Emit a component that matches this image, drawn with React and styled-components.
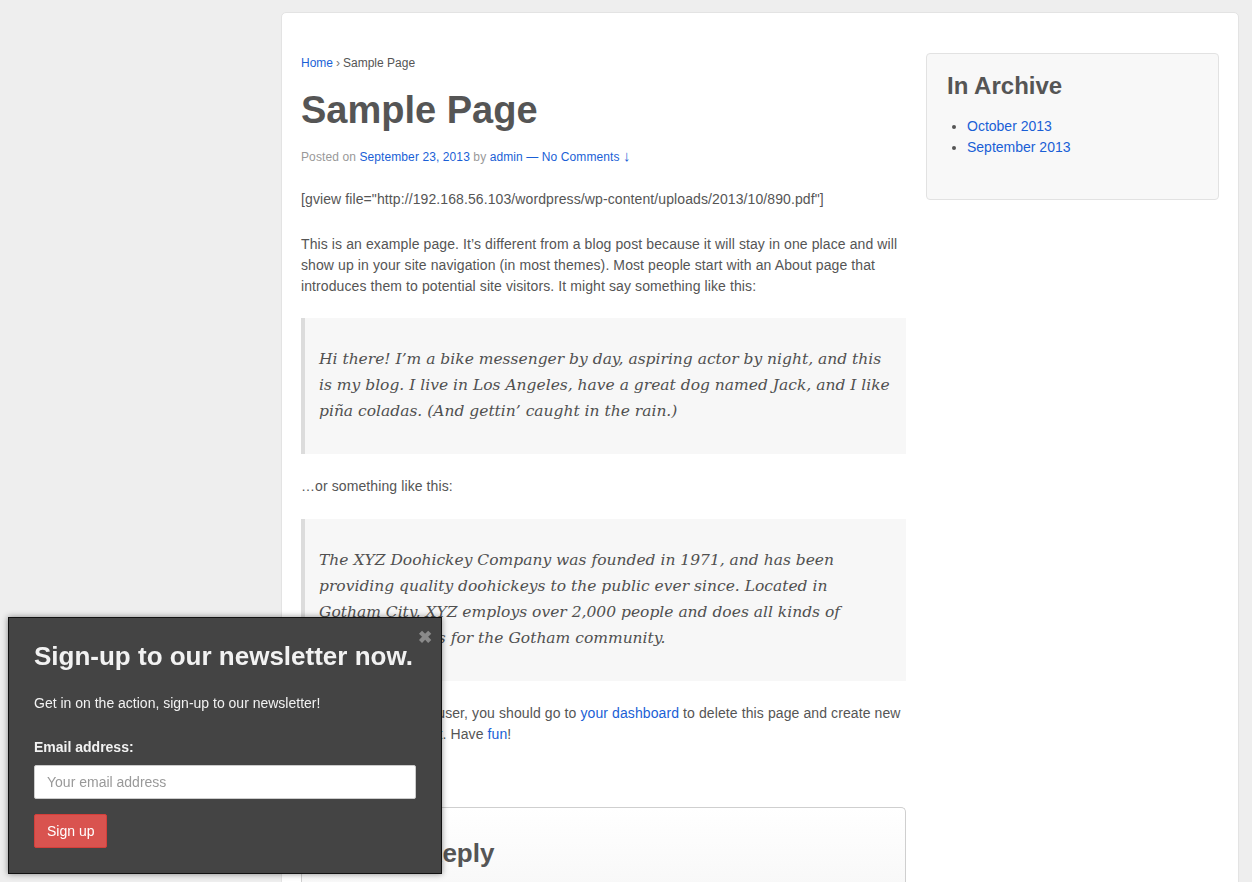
import React from "react";
import styled, { createGlobalStyle } from "styled-components";

const Global = createGlobalStyle`
  html, body { margin: 0; padding: 0; }
  body {
    background: #eeeeee;
    font-family: "Liberation Sans", Arial, sans-serif;
    color: #555;
    overflow: hidden;
  }
  * { box-sizing: border-box; }
`;

const Page = styled.div`
  display: grid;
  grid-template-columns: 281px 958px;
  padding-top: 12px;
  height: 882px;
  overflow: hidden;
`;

const LeftRail = styled.div``;

const Card = styled.div`
  background: #fff;
  border: 1px solid #e3e3e3;
  border-radius: 5px;
  padding: 40px 19px 0 19px;
  display: grid;
  grid-template-columns: 605px 293px;
  column-gap: 20px;
  align-items: start;
  min-height: 900px;
`;

const Main = styled.main`
  font-size: 14px;
  line-height: 21px;
  letter-spacing: 0.1px;
`;

const Link = styled.a`
  color: #1a5fd6;
  text-decoration: none;
`;

const Breadcrumb = styled.div`
  font-size: 12px;
  line-height: 20px;
  color: #555;
  letter-spacing: 0;
`;

const Sep = styled.span`
  color: #777;
  margin: 0 3px;
`;

const Title = styled.h1`
  font-size: 38px;
  line-height: 44px;
  font-weight: bold;
  color: #555;
  margin: 15px 0 14px;
  letter-spacing: 0;
`;

const Meta = styled.div`
  font-size: 12px;
  line-height: 20px;
  color: #999;
  margin-bottom: 22px;
`;

const Arrow = styled.span`
  font-size: 15px;
`;

const P = styled.p`
  margin: 0 0 ${(p) => p.$mb ?? 24}px;
  white-space: nowrap;
`;

const Quote = styled.blockquote`
  margin: 0 0 ${(p) => p.$mb ?? 22}px;
  background: #f7f7f7;
  border-left: 4px solid #dcdcdc;
  padding: 28px 14px 30px 14px;
  font-family: "DejaVu Serif", Georgia, serif;
  font-style: italic;
  font-size: 15.5px;
  line-height: 26px;
  letter-spacing: 0;
  color: #505050;
  white-space: nowrap;
`;

const ReplyBox = styled.section`
  margin-top: 62px;
  border: 1px solid #cfcfcf;
  border-bottom: none;
  border-radius: 5px 5px 0 0;
  background: linear-gradient(#ffffff, #f6f6f6);
  padding: 28px 19px 0;
  height: 100px;
`;

const ReplyTitle = styled.h3`
  margin: 0;
  font-size: 26px;
  line-height: 34px;
  font-weight: bold;
  color: #555;
  letter-spacing: 0;
`;

const Sidebar = styled.aside``;

const Widget = styled.div`
  background: #f8f8f8;
  border: 1px solid #e2e2e2;
  border-radius: 4px;
  padding: 18px 20px 20px;
`;

const WidgetTitle = styled.h3`
  margin: 0 0 17px;
  font-size: 24px;
  line-height: 27px;
  font-weight: bold;
  color: #555;
`;

const List = styled.ul`
  margin: 0 0 21px;
  padding-left: 20px;
  font-size: 14px;
  line-height: 21px;
  color: #555;
`;

const Popup = styled.div`
  position: fixed;
  left: 8px;
  top: 617px;
  width: 434px;
  height: 257px;
  background: #444444;
  border: 1px solid #111;
  box-shadow: 0 0 6px rgba(0, 0, 0, 0.45);
  padding: 20px 25px 0 25px;
  color: #fff;
`;

const Close = styled.span`
  position: absolute;
  right: 9px;
  top: 10px;
  color: #8a8a8a;
  font-size: 17px;
  font-weight: bold;
  line-height: 20px;
`;

const PopTitle = styled.h2`
  margin: 0;
  font-size: 26px;
  line-height: 36px;
  font-weight: bold;
  color: #f2f2f2;
`;

const PopText = styled.p`
  margin: 19px 0 0;
  font-size: 14px;
  line-height: 20px;
  color: #f2f2f2;
`;

const Label = styled.label`
  display: block;
  margin-top: 24px;
  font-size: 14px;
  line-height: 20px;
  font-weight: bold;
  color: #f2f2f2;
`;

const Input = styled.input`
  display: block;
  margin-top: 8px;
  width: 382px;
  height: 34px;
  border: 1px solid #ccc;
  border-radius: 2px;
  padding: 0 12px;
  font-family: "Liberation Sans", Arial, sans-serif;
  font-size: 14px;
  color: #555;
  &::placeholder { color: #999; }
`;

const Button = styled.button`
  display: block;
  margin-top: 15px;
  height: 34px;
  padding: 0 12px;
  background: #d9534f;
  border: 1px solid #d43f3a;
  border-radius: 2px;
  color: #fff;
  font-family: "Liberation Sans", Arial, sans-serif;
  font-size: 14px;
`;

export default function App() {
  return (
    <>
      <Global />
      <Page>
        <LeftRail />
        <Card>
          <Main>
            <Breadcrumb>
              <Link href="#">Home</Link>
              <Sep>›</Sep>Sample Page
            </Breadcrumb>
            <Title>Sample Page</Title>
            <Meta>
              Posted on <Link href="#">September 23, 2013</Link> by{" "}
              <Link href="#">admin</Link> <Link href="#">— No Comments <Arrow>↓</Arrow></Link>
            </Meta>
            <P>[gview file="http://192.168.56.103/wordpress/wp-content/uploads/2013/10/890.pdf"]</P>
            <P $mb={21}>
              This is an example page. It’s different from a blog post because it will stay in one place and will
              <br />
              show up in your site navigation (in most themes). Most people start with an About page that
              <br />
              introduces them to potential site visitors. It might say something like this:
            </P>
            <Quote $mb={22}>
              Hi there! I’m a bike messenger by day, aspiring actor by night, and this
              <br />
              is my blog. I live in Los Angeles, have a great dog named Jack, and I like
              <br />
              piña coladas. (And gettin’ caught in the rain.)
            </Quote>
            <P $mb={22}>…or something like this:</P>
            <Quote $mb={22}>
              The XYZ Doohickey Company was founded in 1971, and has been
              <br />
              providing quality doohickeys to the public ever since. Located in
              <br />
              Gotham City, XYZ employs over 2,000 people and does all kinds of
              <br />
              awesome things for the Gotham community.
            </Quote>
            <P $mb={0}>
              As a new WordPress user, you should go to <Link href="#">your dashboard</Link> to delete this page and create new
              <br />
              pages for your <Link href="#">content</Link>. Have <Link href="#">fun</Link>!
            </P>
            <ReplyBox>
              <ReplyTitle>Leave a Reply</ReplyTitle>
            </ReplyBox>
          </Main>
          <Sidebar>
            <Widget>
              <WidgetTitle>In Archive</WidgetTitle>
              <List>
                <li><Link href="#">October 2013</Link></li>
                <li><Link href="#">September 2013</Link></li>
              </List>
            </Widget>
          </Sidebar>
        </Card>
      </Page>
      <Popup>
        <Close>✖</Close>
        <PopTitle>Sign-up to our newsletter now.</PopTitle>
        <PopText>Get in on the action, sign-up to our newsletter!</PopText>
        <Label>Email address:</Label>
        <Input placeholder="Your email address" />
        <Button>Sign up</Button>
      </Popup>
    </>
  );
}
